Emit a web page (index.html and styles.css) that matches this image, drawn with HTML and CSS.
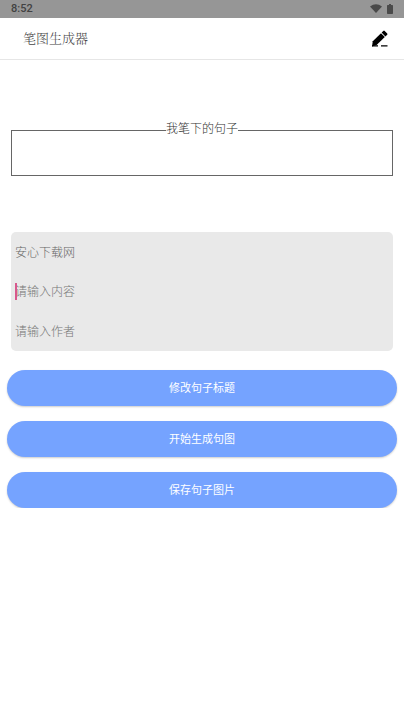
FILE: index.html
```html
<!DOCTYPE html>
<html lang="zh-CN">
<head>
<meta charset="utf-8">
<meta name="viewport" content="width=device-width, initial-scale=1">
<title>笔图生成器</title>
<link rel="stylesheet" href="styles.css">
</head>
<body>
<div class="status">
  <span>8:52</span>
  <div class="status-icons">
    <svg width="12" height="10" viewBox="0 0 12 10" aria-hidden="true"><path d="M0 2.500Q6-2 12 2.500L6 9Z"/></svg>
    <svg width="6" height="10" viewBox="0 0 6 10" aria-hidden="true"><path d="M2 0h2v1h1.300q.7 0 .7.7v7.600q0 .7-.7.7H.7Q0 10 0 9.300V1.700Q0 1 .7 1H2Z"/></svg>
  </div>
</div>
<header class="bar">
  <h1>笔图生成器</h1>
  <button class="edit" type="button" aria-label="编辑">
    <svg width="18" height="18" viewBox="0 0 18 18" aria-hidden="true">
      <path d="M1 16.500L1.800 11.300L10 3.200L13.800 7L5.600 15Z"/>
      <path d="M10.600 2.600L12.300.9Q13 .3 13.700.9L16.200 3.400Q16.800 4 16.200 4.700L14.400 6.400Z"/>
      <path d="M1 15.300H7V16.500H1ZM10 15.300H16.500V16.500H10Z"/>
    </svg>
  </button>
</header>
<main>
  <fieldset class="preview"><legend>我笔下的句子</legend></fieldset>
  <form>
    <div class="fields">
      <input type="text" aria-label="标题" value="安心下载网">
      <div class="active"><input type="text" aria-label="内容" placeholder="请输入内容"></div>
      <input type="text" aria-label="作者" placeholder="请输入作者">
    </div>
    <div class="actions">
      <button type="button">修改句子标题</button>
      <button type="button">开始生成句图</button>
      <button type="button">保存句子图片</button>
    </div>
  </form>
</main>
</body>
</html>
```
FILE: styles.css
```css
* {
  box-sizing: border-box;
}

body {
  margin: 0;
  background: #fff;
  color: #333;
  font: 300 12px/18px Roboto, "Noto Sans CJK SC", sans-serif;
}

button,
input {
  border: 0;
  padding: 0;
  font: inherit;
}

.status {
  display: flex;
  align-items: center;
  justify-content: space-between;
  height: 18px;
  padding: 0 11px;
  background: #969696;
  color: #424242;
  font-size: 11px;
  font-weight: 500;
}

.status-icons {
  display: flex;
  gap: 5px;
  fill: #4a4a4a;
}

.bar {
  display: flex;
  align-items: center;
  justify-content: space-between;
  height: 42px;
  padding: 0 15px 0 23px;
  border-bottom: 1px solid #e6e6e6;
}

h1 {
  margin: 0;
  padding-bottom: 2px;
  color: #444;
  font-family: "Noto Serif CJK SC", "Noto Sans CJK SC", serif;
  font-size: 13px;
  font-weight: 300;
}

.edit {
  display: flex;
  background: none;
}

.preview {
  height: 56px;
  margin: 60px 11px 56px;
  padding: 0;
  border: 1px solid #666;
}

legend {
  margin: 0 auto;
  padding: 0 0 2px;
}

.fields {
  display: grid;
  grid-auto-rows: 39px;
  gap: 1px;
  margin: 0 11px;
  padding: 0 4px;
  border-radius: 5px;
  background: #e9e9e9;
}

.fields input {
  width: 100%;
  height: 39px;
  background: none;
  color: #666;
  outline: 0;
}

.fields input::placeholder {
  color: #777;
}

.active {
  position: relative;
}

.active::before {
  content: "";
  position: absolute;
  top: 11px;
  left: 0;
  width: 2px;
  height: 17px;
  background: #d8588c;
}

.actions {
  display: grid;
  gap: 15px;
  margin: 19px 7px 0;
}

.actions button {
  height: 36px;
  padding-top: 2px;
  border-radius: 18px;
  background: #75a3ff;
  box-shadow: 0 1px 2px rgba(0, 0, 0, 0.2);
  color: #fff;
  font-size: 11px;
  font-weight: 400;
}
```
